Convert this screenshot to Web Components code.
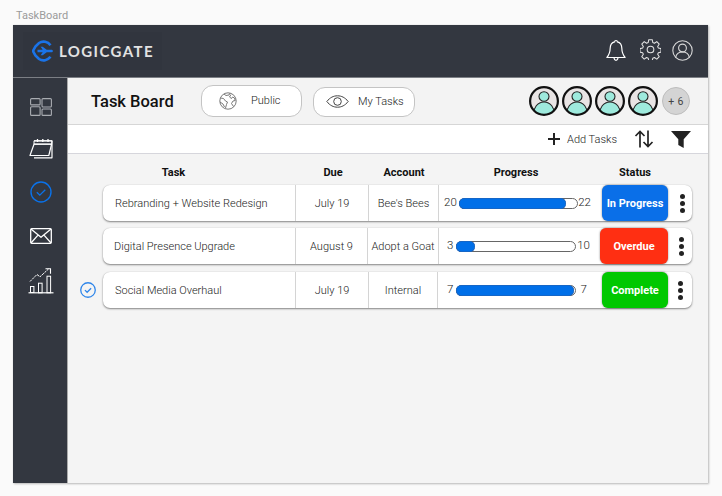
<!DOCTYPE html>
<html>
<head>
<meta charset="utf-8">
<title>TaskBoard</title>
<style>
html, body { margin: 0; height: 100%; background: #fafafa; overflow: hidden; }
body { font-family: Roboto, "Liberation Sans", sans-serif; }
</style>
</head>
<body>
<task-board></task-board>

<script>
const icons = {
  logo: `<svg width="22" height="22" viewBox="0 0 22 22" fill="none"><path d="M18.5 5.2A8.6 8.6 0 0 0 7 3L3.4 6.6 1 11l2.4 4.4L7 19a8.6 8.6 0 0 0 11.5-2.2" stroke="#1a73e8" stroke-width="2.6"/><path d="M5.5 9.7h5.2L8.6 6.8h2.1l4 2.9h4.6c1 0 1.6.6 1.6 1.3s-.6 1.3-1.6 1.3h-4.6l-4 2.9H8.6l2.1-2.9H5.5z" fill="#1a73e8"/></svg>`,
  bell: `<svg width="22" height="23" viewBox="0 0 22 23" fill="none" stroke="#fff" stroke-width="1.2" stroke-linejoin="round"><path d="M11 1.5c.9 0 1.4.6 1.4 1.4 2.9.7 4.3 3.2 4.4 6.2.1 3.900.6 6.300 3.300 9.400H1.900c2.700-3.100 3.200-5.500 3.300-9.400.1-3 1.500-5.500 4.400-6.200 0-.8.500-1.400 1.400-1.400z"/><path d="M9 18.800c.2 1.700 1 2.500 2 2.500s1.800-.8 2-2.500"/></svg>`,
  gear: `<svg width="21" height="21" viewBox="0 0 24 24" fill="none" stroke="#e4e4e4" stroke-width="1.200" stroke-linejoin="round"><circle cx="12" cy="12" r="3.800"/><path d="M10 .8h4l.6 3.200 1.900.8 2.700-1.800 2.800 2.800-1.800 2.700.8 1.900 3 .6v4l-3 .6-.8 1.900 1.800 2.700-2.800 2.800-2.700-1.800-1.900.8-.6 2.800h-4l-.6-2.800-1.900-.8-2.700 1.800-2.800-2.800 1.800-2.700-.8-1.900-3-.6v-4l3-.6.8-1.900-1.800-2.700 2.800-2.800 2.700 1.800 1.900-.8z"/></svg>`,
  user: `<svg width="21" height="21" viewBox="0 0 21 21" fill="none" stroke="#d8d8d8" stroke-width="1.100"><circle cx="10.500" cy="10.500" r="9.700"/><circle cx="10.500" cy="8" r="3.900"/><path d="M3.700 17.500c.6-3.500 3.300-5.500 6.800-5.500s6.200 2 6.800 5.500"/></svg>`,
  dash: `<svg width="22" height="18" viewBox="0 0 22 18" fill="none" stroke="#a9acb1" stroke-width="1.100"><rect x=".6" y=".6" width="9.500" height="6.300" rx="1"/><rect x="12" y=".6" width="9.400" height="8.400" rx="1"/><rect x=".6" y="8.700" width="9.500" height="8.700" rx="1"/><rect x="12" y="11" width="9.400" height="6.400" rx="1"/></svg>`,
  cal: `<svg width="24" height="21" viewBox="0 0 24 21" fill="none" stroke="#fff" stroke-width="1.200" stroke-linejoin="round"><path d="M5 2.800h18v17H5"/><path d="M5 2.800h18l-.4 3.400H5z" stroke-width="1"/><path d="M5 6.200h17.600L19.800 17.500H1z"/><path d="M8.500 1v3M13.800 1v3M19 1v3" stroke-width="1.300"/></svg>`,
  check: `<svg width="22" height="22" viewBox="0 0 22 22" fill="none" stroke="#0a72ea" stroke-width="1.400"><circle cx="11" cy="11" r="10"/><path d="M6.800 11.200l3 3 5.500-5.500" stroke-width="1.300"/></svg>`,
  mail: `<svg width="22" height="16" viewBox="0 0 22 16" fill="none" stroke="#fff" stroke-width="1.300" stroke-linejoin="round"><rect x=".7" y=".7" width="20.600" height="14.600" rx="1"/><path d="M1 1l10 8.300L21 1M1 15l7-7.900M21 15l-7-7.900"/></svg>`,
  chart: `<svg width="26" height="26" viewBox="0 0 26 26" fill="none" stroke="#fff" stroke-width="1"><path d="M.5 24.800h25" stroke-width="1.200"/><rect x="2.500" y="18.500" width="3.400" height="6"/><rect x="10.500" y="15.200" width="3.600" height="9.600"/><rect x="19" y="8.200" width="3.600" height="16.600"/><path d="M2 13.500l7-7 3 2.300 8.500-7.800" stroke-dasharray="2.500 .8"/><path d="M17.500 .8h5v5" stroke-width="1.100"/></svg>`,
  globe: `<svg width="18" height="18" viewBox="0 0 18 18" fill="none" stroke="#6b6b6b" stroke-width=".9" stroke-linejoin="round"><circle cx="9" cy="9" r="8.200"/><path d="M5 2l2 1.500 3-.5 1-1.800M1.500 6l3 .5 2 2.500 2 1-1 2.500-1 3.500M1 10l3 2 1.500 3M12 2.500l-1.500 2.500 2 1.500 1-1.500 2 1 .7 2.500-2.200.5-1.500 2.500 2 3"/></svg>`,
  eye: `<svg width="23" height="13" viewBox="0 0 23 13" fill="none" stroke="#444" stroke-width="1"><path d="M.8 6.500C4 2.500 7.500.8 11.500.8s7.500 1.700 10.700 5.700c-3.200 4-6.700 5.700-10.700 5.700S4 10.500.8 6.500z"/><circle cx="11.500" cy="6.500" r="3.800"/></svg>`,
  sort: `<svg width="20" height="18" viewBox="0 0 20 18" fill="none" stroke="#222" stroke-width="1.700"><path d="M6 17.500V1.500M1.500 6L6 1.500 10.500 6M14 .5v16M9.500 12l4.500 4.500 4.500-4.500"/></svg>`,
  filter: `<svg width="20" height="17" viewBox="0 0 20 17" fill="#222"><path d="M0 0h20l-7.300 8.200V17l-5.400-3V8.200z"/></svg>`,
  plus: `<svg width="12" height="12" viewBox="0 0 12 12" stroke="#222" stroke-width="2"><path d="M6 0v12M0 6h12"/></svg>`,
  face: `<svg width="30" height="30" viewBox="0 0 30 30"><circle cx="15" cy="15" r="13.900" fill="#e8e4e4"/><clipPath id="c"><circle cx="15" cy="15" r="13.900"/></clipPath><g clip-path="url(#c)" fill="#9eeadd" stroke="#222" stroke-width="1.100"><path d="M4 31C4 21 9 16 15 16s11 5 11 15z"/><ellipse cx="15" cy="10.500" rx="5" ry="4.800"/></g><circle cx="15" cy="15" r="13.900" fill="none" stroke="#111" stroke-width="2.200"/></svg>`
};

class TbTopbar extends HTMLElement {
  constructor() {
    super();
    this.attachShadow({ mode: 'open' }).innerHTML = `
    <style>
      :host { display: flex; align-items: center; justify-content: space-between; height: 52px; background: #333740; border-bottom: 1px solid #7c7f85; padding: 0 15px 0 10px; }
      .logo { display: flex; align-items: center; gap: 5px; height: 38px; width: 139px; padding-left: 9px; box-sizing: border-box; background: #31353e; font: 700 15px Lato, sans-serif; letter-spacing: 1.400px; color: #e2e2e2; }
      .logo svg { display: block; }
      .tools { display: flex; align-items: center; margin-top: -2px; }
      .tools svg { display: block; }
      .tools svg:nth-child(2) { margin: -1px 11px 0 13px; }
    </style>
    <div class="logo">${icons.logo}<span>LOGICGATE</span></div>
    <div class="tools">${icons.bell}${icons.gear}${icons.user}</div>`;
  }
}

class TbSidebar extends HTMLElement {
  constructor() {
    super();
    const items = [[icons.dash, 42], [icons.cal, 41], [icons.check, 45], [icons.mail, 43], [icons.chart, 48]];
    this.attachShadow({ mode: 'open' }).innerHTML = `
    <style>
      :host { display: flex; flex-direction: column; width: 55px; flex: none; background: #333740; padding-top: 8px; box-sizing: border-box; border-right: 1px solid #aaa; }
      div { display: flex; align-items: center; justify-content: center; margin-left: 1px; }
    </style>
    ${items.map(([i, h]) => `<div style="height:${h}px">${i}</div>`).join('')}`;
  }
}

class TbPill extends HTMLElement {
  constructor() {
    super();
    this.attachShadow({ mode: 'open' }).innerHTML = `
    <style>
      :host { display: flex; align-items: center; height: 29px; background: #fff; border: 1px solid #c4c4c4; border-radius: 12px; font-size: 11px; font-weight: 300; color: #222; }
      ::slotted(svg) { display: block; }
    </style>
    <slot name="icon"></slot><slot></slot>`;
  }
}

class TbHeader extends HTMLElement {
  constructor() {
    super();
    this.attachShadow({ mode: 'open' }).innerHTML = `
    <style>
      :host { display: flex; align-items: center; height: 46px; padding: 0 18px 0 23px; background: #f3f3f3; border-bottom: 1px solid #d6d6d6; }
      h1 { margin: 0; font: 500 16.500px Roboto, sans-serif; color: #111; width: 110px; }
      tb-pill svg { margin-left: 17px; }
      .public { width: 99px; margin-top: -1px; height: 30px; margin-right: 11px; }
      .public span { margin-left: 14px; }
      .mine { width: 100px; margin-top: 1px; height: 28px; }
      .mine svg { margin-left: 12px; }
      .mine span { margin-left: 9px; }
      .team { display: flex; align-items: center; gap: 3px; margin-left: auto; }
      .team svg { display: block; }
      .more { width: 26px; height: 26px; border-radius: 50%; background: #d4d4d4; border: 1px solid #bdbdbd; font-size: 10.500px; letter-spacing: .4px; color: #444; display: flex; align-items: center; justify-content: center; margin-left: 1px; }
    </style>
    <h1>Task Board</h1>
    <tb-pill class="public">${icons.globe.replace('<svg', '<svg slot="icon"')}<span>Public</span></tb-pill>
    <tb-pill class="mine">${icons.eye.replace('<svg', '<svg slot="icon"')}<span>My Tasks</span></tb-pill>
    <div class="team">${icons.face.repeat(4)}<div class="more">+ 6</div></div>`;
  }
}

class TbToolbar extends HTMLElement {
  constructor() {
    super();
    this.attachShadow({ mode: 'open' }).innerHTML = `
    <style>
      :host { display: flex; align-items: center; justify-content: flex-end; height: 28px; padding-right: 17px; background: #fff; border-bottom: 1px solid #d6d6dc; font-size: 11px; font-weight: 300; color: #222; }
      svg { display: block; }
      span { margin: 0 17px 0 7px; }
      .f { margin-left: 17px; }
    </style>
    ${icons.plus}<span>Add Tasks</span>${icons.sort}<div class="f">${icons.filter}</div>`;
  }
}

class TbColumns extends HTMLElement {
  constructor() {
    super();
    this.attachShadow({ mode: 'open' }).innerHTML = `
    <style>
      :host { display: grid; grid-template-columns: 193px 74px 68px 156px 82px; height: 28px; padding-top: 2px; box-sizing: border-box; margin-left: 35px; align-items: center; font-size: 11px; font-weight: 700; color: #111; text-align: center; }
      .t { padding-right: 52px; }
    </style>
    <div class="t">Task</div><div>Due</div><div>Account</div><div>Progress</div><div>Status</div>`;
  }
}

class TbProgress extends HTMLElement {
  constructor() {
    super();
    this.attachShadow({ mode: 'open' }).innerHTML = `
    <style>
      :host { display: block; height: 11px; border: 1px solid #666; border-radius: 6px; background: #fff; box-sizing: border-box; flex: 1; }
      i { display: block; height: 11px; margin: -1px 0 0 -1px; background: #006fe8; border-radius: 6px; box-shadow: inset 0 0 0 .5px #2b5fa5; }
    </style>
    <i></i>`;
  }
  connectedCallback() {
    this.shadowRoot.querySelector('i').style.width = this.getAttribute('pct') + '%';
  }
}

class TbRow extends HTMLElement {
  constructor() {
    super();
    const g = n => this.getAttribute(n);
    const bg = { 'In Progress': '#0a6fe8', 'Overdue': '#ff2f12', 'Complete': '#00c800' }[g('status')];
    this.attachShadow({ mode: 'open' }).innerHTML = `
    <style>
      :host { display: flex; align-items: center; margin-left: 12px; }
      .tick { width: 16px; height: 16px; flex: none; margin-right: 7px; }
      .tick svg { display: block; width: 16px; height: 16px; }
      .tick svg * { stroke: #2f86ea; stroke-width: 1.800; }
      .card { display: grid; grid-template-columns: var(--cols); width: 589px; height: 36px; background: #fff; border-radius: 7px; box-shadow: 0 1px 2px rgba(0,0,0,.45), 0 0 1px rgba(0,0,0,.2); font-size: 11px; font-weight: 300; color: #222; align-items: stretch; }
      .cell { display: flex; align-items: center; justify-content: center; border-left: 1px solid #d4d4d4; white-space: nowrap; }
      .task { justify-content: flex-start; border-left: 0; padding-left: var(--task-pad, 12px); }
      .prog { justify-content: flex-start; padding: 0 var(--prog-r, 12px) 0 var(--prog-l, 5px); }
      .prog b { font-weight: 300; font-size: 11.500px; margin-top: -2px; }
      .prog b:first-child { margin-right: var(--gap-l, 3px); }
      .prog b:last-child { margin-left: var(--gap-r, 0); }
      .status { border-left: 0; border-radius: 6px; background: ${bg}; color: #fff; font-weight: 700; font-size: 11px; box-shadow: 0 0 2px rgba(0,0,0,.5); }
      .menu { display: flex; flex-direction: column; align-items: center; justify-content: center; gap: 2px; padding-left: var(--menu-x, 0); box-sizing: border-box; }
      .menu i { width: 5px; height: 5px; border-radius: 50%; background: #222; }
    </style>
    <div class="tick">${g('checked') !== null ? icons.check : ''}</div>
    <div class="card">
      <div class="cell task">${g('task')}</div>
      <div class="cell">${g('due')}</div>
      <div class="cell">${g('account')}</div>
      <div class="cell prog"><b>${g('done')}</b><tb-progress pct="${g('pct')}"></tb-progress><b>${g('total')}</b></div>
      <div class="cell status">${g('status')}</div>
      <div class="menu"><i></i><i></i><i></i></div>
    </div>`;
  }
}

class TaskBoard extends HTMLElement {
  constructor() {
    super();
    this.attachShadow({ mode: 'open' }).innerHTML = `
    <style>
      :host { display: block; height: 496px; padding: 9px 14px 13px 13px; box-sizing: border-box; color: #333; }
      .label { height: 16px; padding-left: 3px; font-size: 11px; line-height: 13px; color: #9a9a9a; }
      .frame { display: flex; flex-direction: column; height: 458px; box-shadow: 1px 1px 2px rgba(0,0,0,.25), 0 0 1px rgba(0,0,0,.15); background: #f4f4f4; }
      .body { display: flex; flex: 1; min-height: 0; }
      main { flex: 1; min-width: 0; display: flex; flex-direction: column; }
      .list { display: flex; flex-direction: column; padding-top: 3px; }
      tb-row + tb-row { margin-top: 7px; }
      tb-row.r3 { margin-top: 8px; }
    </style>
    <div class="label">TaskBoard</div>
    <div class="frame">
      <tb-topbar></tb-topbar>
      <div class="body">
        <tb-sidebar></tb-sidebar>
        <main>
          <tb-header></tb-header>
          <tb-toolbar></tb-toolbar>
          <div class="list">
            <tb-columns></tb-columns>
            <tb-row style="--cols:192px 73px 70px 164px 66px 24px;--prog-l:5px;--prog-r:11px;--gap-l:2px;--menu-x:4px" task="Rebranding + Website Redesign" due="July 19" account="Bee's Bees" done="20" pct="91" total="22" status="In Progress"></tb-row>
            <tb-row style="--cols:192px 72px 71px 162px 68px 24px;--prog-l:8px;--prog-r:10px;--gap-r:1px;--task-pad:11px;--menu-x:2px" task="Digital Presence Upgrade" due="August 9" account="Adopt a Goat" done="3" pct="16" total="10" status="Overdue"></tb-row>
            <tb-row class="r3" style="--cols:192px 73px 69px 165px 66px 24px;--prog-l:9px;--prog-r:15px;--gap-r:5px;--menu-x:1px" task="Social Media Overhaul" due="July 19" account="Internal" done="7" pct="100" total="7" status="Complete" checked></tb-row>
          </div>
        </main>
      </div>
    </div>`;
  }
}

customElements.define('tb-topbar', TbTopbar);
customElements.define('tb-sidebar', TbSidebar);
customElements.define('tb-pill', TbPill);
customElements.define('tb-header', TbHeader);
customElements.define('tb-toolbar', TbToolbar);
customElements.define('tb-columns', TbColumns);
customElements.define('tb-progress', TbProgress);
customElements.define('tb-row', TbRow);
customElements.define('task-board', TaskBoard);
</script>
</body>
</html>
